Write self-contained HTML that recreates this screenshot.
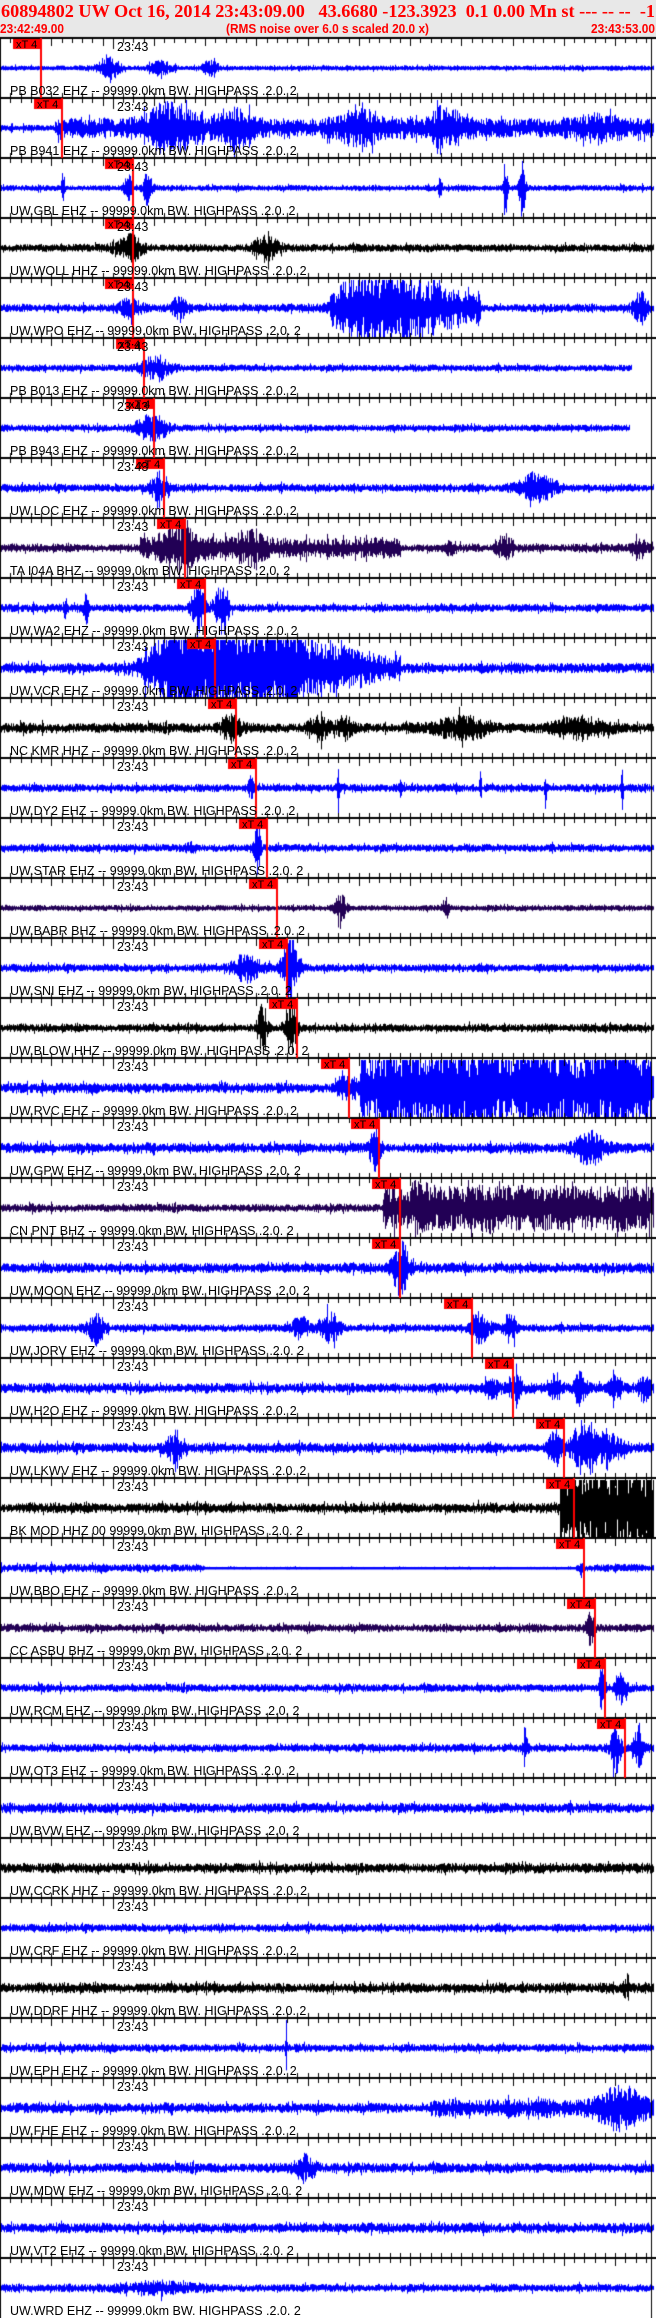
<!DOCTYPE html>
<html><head><meta charset="utf-8">
<style>
html,body{margin:0;padding:0;background:#fff;}
#wrap{position:relative;width:656px;height:2318px;overflow:hidden;background:#fff;}
canvas,svg{position:absolute;left:0;top:0;}
</style></head>
<body>
<div id="wrap">
<canvas id="c" width="656" height="2318"></canvas>
<svg id="s" width="656" height="2318" xmlns="http://www.w3.org/2000/svg" font-family="Liberation Sans, sans-serif">
<text x="1" y="17" font-family="Liberation Serif, serif" font-weight="bold" font-size="18" fill="#ff0000" textLength="654" lengthAdjust="spacingAndGlyphs" xml:space="preserve">60894802 UW Oct 16, 2014 23:43:09.00   43.6680 -123.3923  0.1 0.00 Mn st --- -- --  -1</text>
<text x="0" y="33" font-weight="bold" font-size="12.5" fill="#ff0000" textLength="64" lengthAdjust="spacingAndGlyphs">23:42:49.00</text>
<text x="226" y="33" font-weight="bold" font-size="12.5" fill="#ff0000" textLength="203" lengthAdjust="spacingAndGlyphs">(RMS noise over 6.0 s scaled 20.0 x)</text>
<text x="591" y="33" font-weight="bold" font-size="12.5" fill="#ff0000" textLength="64" lengthAdjust="spacingAndGlyphs">23:43:53.00</text>
<g id="labels" font-size="12.5" fill="#000">
<text x="10" y="95">PB B032 EHZ -- 99999.0km BW. HIGHPASS .2.0. 2</text>
<text x="10" y="155">PB B941 EHZ -- 99999.0km BW. HIGHPASS .2.0. 2</text>
<text x="10" y="215">UW.GBL EHZ -- 99999.0km BW. HIGHPASS .2.0. 2</text>
<text x="10" y="275">UW.WOLL HHZ -- 99999.0km BW. HIGHPASS .2.0. 2</text>
<text x="10" y="335">UW.WPO EHZ -- 99999.0km BW. HIGHPASS .2.0. 2</text>
<text x="10" y="395">PB B013 EHZ -- 99999.0km BW. HIGHPASS .2.0. 2</text>
<text x="10" y="455">PB B943 EHZ -- 99999.0km BW. HIGHPASS .2.0. 2</text>
<text x="10" y="515">UW.LOC EHZ -- 99999.0km BW. HIGHPASS .2.0. 2</text>
<text x="10" y="575">TA I04A BHZ -- 99999.0km BW. HIGHPASS .2.0. 2</text>
<text x="10" y="635">UW.WA2 EHZ -- 99999.0km BW. HIGHPASS .2.0. 2</text>
<text x="10" y="695">UW.VCR EHZ -- 99999.0km BW. HIGHPASS .2.0. 2</text>
<text x="10" y="755">NC KMR HHZ -- 99999.0km BW. HIGHPASS .2.0. 2</text>
<text x="10" y="815">UW.DY2 EHZ -- 99999.0km BW. HIGHPASS .2.0. 2</text>
<text x="10" y="875">UW.STAR EHZ -- 99999.0km BW. HIGHPASS .2.0. 2</text>
<text x="10" y="935">UW.BABR BHZ -- 99999.0km BW. HIGHPASS .2.0. 2</text>
<text x="10" y="995">UW.SNI EHZ -- 99999.0km BW. HIGHPASS .2.0. 2</text>
<text x="10" y="1055">UW.BLOW HHZ -- 99999.0km BW. HIGHPASS .2.0. 2</text>
<text x="10" y="1115">UW.RVC EHZ -- 99999.0km BW. HIGHPASS .2.0. 2</text>
<text x="10" y="1175">UW.GPW EHZ -- 99999.0km BW. HIGHPASS .2.0. 2</text>
<text x="10" y="1235">CN PNT BHZ -- 99999.0km BW. HIGHPASS .2.0. 2</text>
<text x="10" y="1295">UW.MOON EHZ -- 99999.0km BW. HIGHPASS .2.0. 2</text>
<text x="10" y="1355">UW.JORV EHZ -- 99999.0km BW. HIGHPASS .2.0. 2</text>
<text x="10" y="1415">UW.H2O EHZ -- 99999.0km BW. HIGHPASS .2.0. 2</text>
<text x="10" y="1475">UW.LKWV EHZ -- 99999.0km BW. HIGHPASS .2.0. 2</text>
<text x="10" y="1535">BK MOD HHZ 00 99999.0km BW. HIGHPASS .2.0. 2</text>
<text x="10" y="1595">UW.BBO EHZ -- 99999.0km BW. HIGHPASS .2.0. 2</text>
<text x="10" y="1655">CC ASBU BHZ -- 99999.0km BW. HIGHPASS .2.0. 2</text>
<text x="10" y="1715">UW.RCM EHZ -- 99999.0km BW. HIGHPASS .2.0. 2</text>
<text x="10" y="1775">UW.OT3 EHZ -- 99999.0km BW. HIGHPASS .2.0. 2</text>
<text x="10" y="1835">UW.BVW EHZ -- 99999.0km BW. HIGHPASS .2.0. 2</text>
<text x="10" y="1895">UW.CCRK HHZ -- 99999.0km BW. HIGHPASS .2.0. 2</text>
<text x="10" y="1955">UW.CRF EHZ -- 99999.0km BW. HIGHPASS .2.0. 2</text>
<text x="10" y="2015">UW.DDRF HHZ -- 99999.0km BW. HIGHPASS .2.0. 2</text>
<text x="10" y="2075">UW.EPH EHZ -- 99999.0km BW. HIGHPASS .2.0. 2</text>
<text x="10" y="2135">UW.FHE EHZ -- 99999.0km BW. HIGHPASS .2.0. 2</text>
<text x="10" y="2195">UW.MDW EHZ -- 99999.0km BW. HIGHPASS .2.0. 2</text>
<text x="10" y="2255">UW.VT2 EHZ -- 99999.0km BW. HIGHPASS .2.0. 2</text>
<text x="10" y="2315">UW.WRD EHZ -- 99999.0km BW. HIGHPASS .2.0. 2</text>
</g>
<g id="times" font-size="12.5" fill="#000">
<text x="117" y="51">23:43</text><text x="117" y="111">23:43</text><text x="117" y="171">23:43</text><text x="117" y="231">23:43</text><text x="117" y="291">23:43</text><text x="117" y="351">23:43</text><text x="117" y="411">23:43</text><text x="117" y="471">23:43</text><text x="117" y="531">23:43</text><text x="117" y="591">23:43</text><text x="117" y="651">23:43</text><text x="117" y="711">23:43</text><text x="117" y="771">23:43</text><text x="117" y="831">23:43</text><text x="117" y="891">23:43</text><text x="117" y="951">23:43</text><text x="117" y="1011">23:43</text><text x="117" y="1071">23:43</text><text x="117" y="1131">23:43</text><text x="117" y="1191">23:43</text><text x="117" y="1251">23:43</text><text x="117" y="1311">23:43</text><text x="117" y="1371">23:43</text><text x="117" y="1431">23:43</text><text x="117" y="1491">23:43</text><text x="117" y="1551">23:43</text><text x="117" y="1611">23:43</text><text x="117" y="1671">23:43</text><text x="117" y="1731">23:43</text><text x="117" y="1791">23:43</text><text x="117" y="1851">23:43</text><text x="117" y="1911">23:43</text><text x="117" y="1971">23:43</text><text x="117" y="2031">23:43</text><text x="117" y="2091">23:43</text><text x="117" y="2151">23:43</text><text x="117" y="2211">23:43</text><text x="117" y="2271">23:43</text>
</g>
<g id="picks"></g>
</svg>
</div>
<script>
(function(){
var cv=document.getElementById('c'),ctx=cv.getContext('2d');
ctx.fillStyle='#e8e8e8';ctx.fillRect(0,0,656,37);
var NS='http://www.w3.org/2000/svg';
var seed=12345;function rnd(){seed=(seed*1103515245+12345)&0x7fffffff;return seed/0x7fffffff;}
var B='#0000ff',K='#000000',P='#220055';
var P_=[
[B,2.5,[['g',108,12,10],['g',160,6,10],['g',210,7,8]]],
[B,3,[['r',55,656,7],['g',170,20,25],['g',235,14,15],['g',360,12,20],['g',445,16,15],['g',600,6,20]]],
[B,3,[['g',63,22,1.5],['g',128,12,4],['g',147,18,4],['g',440,10,2],['g',505,30,2],['g',522,28,3]]],
[K,4,[['g',130,12,12],['g',265,10,12]]],
[B,4,[['g',130,10,10],['g',180,12,8],['r',330,480,12],['g',370,20,30],['g',420,15,25],['g',640,12,8]]],
[B,3.5,[['g',155,12,15]],[0,632]],
[B,3.5,[['g',150,13,15]],[0,630]],
[B,4,[['g',160,12,10],['g',535,12,20]]],
[P,4,[['r',140,400,6],['g',180,14,20],['g',250,10,20],['g',505,12,8],['g',450,7,5],['g',640,8,8]]],
[B,4,[['g',65,8,2],['g',86,12,2],['g',198,30,6],['g',222,25,6]]],
[B,5,[['r',145,400,10],['g',250,40,70],['g',175,25,20]]],
[K,5,[['g',230,12,10],['g',318,9,10],['g',345,9,8],['g',460,10,25],['g',580,10,25]]],
[B,4,[['g',250,10,3],['g',338,22,1],['g',400,20,1],['g',480,20,1],['g',545,22,1],['g',622,22,1]]],
[B,4,[['g',257,28,3],['g',190,4,5]]],
[P,3,[['g',340,12,6],['g',445,8,4]]],
[B,4,[['g',245,12,15],['g',290,28,8]]],
[K,4,[['g',262,22,5],['g',290,28,6]]],
[B,5,[['r',335,656,8],['r',360,650,30]]],
[B,5,[['g',375,22,5],['g',590,14,15]]],
[P,4,[['r',383,656,20]]],
[B,5,[['g',400,25,8]]],
[B,4,[['g',95,14,8],['g',300,10,8],['g',330,14,10],['g',480,12,10],['g',510,14,6]]],
[B,5,[['g',490,10,6],['g',515,14,6],['g',555,12,6],['g',580,14,6],['g',615,12,6],['g',645,12,6]]],
[B,5,[['g',175,12,10],['g',555,16,6],['g',585,30,12],['g',610,14,12]]],
[K,5,[['r',560,656,40]]],
[B,4,[['g',582,12,2]],null,[205,575]],
[P,4,[['g',590,14,4]]],
[B,4,[['g',602,26,3],['g',620,15,6]]],
[B,4,[['g',525,22,2],['g',615,22,5],['g',638,20,5]]],
[B,5,[]],
[K,5,[]],
[B,4,[]],
[K,5,[['g',626,10,2]]],
[B,4,[['g',286,35,0.7]]],
[B,5,[['r',430,656,4],['g',620,16,20]]],
[B,5,[['g',305,12,10]]],
[B,5,[]],
[B,4,[['g',160,4,40]]]
];
var picks=[41,62,133,133,133,144,154,164,185,205,215,236,256,267,277,287,297,349,379,400,400,472,513,564,574,584,595,605,625];
function amp(p,x){var A=p[1];var e=p[2];for(var i=0;i<e.length;i++){var v=e[i];
 if(v[0]=='g')A+=v[2]*Math.exp(-Math.pow((x-v[1])/v[3],2));
 else if(v[0]=='r'){if(x>=v[1]&&x<=v[2])A+=v[3];}}
 if(p[4]&&x>=p[4][0]&&x<=p[4][1])A=1.2;return A;}
for(var k=0;k<38;k++){
 var p=P_[k],top=38+60*k,cy=top+30;
 var st=p[3]?p[3][0]:1,en=p[3]?p[3][1]:654;
 ctx.fillStyle=p[0];
 ctx.fillRect(st,cy-1,en-st,2.5);
 var slow=1;
 for(var x=st;x<en;x++){
  slow=0.85*slow+0.15*(0.5+rnd()*1.0);
  var A=amp(p,x)*slow;
  var u=A*(0.25+0.75*Math.pow(rnd(),0.8)),d=A*(0.25+0.75*Math.pow(rnd(),0.8));
  if(rnd()<0.06){u*=1.5;d*=1.5;}
  var y0=Math.max(top+2,cy-u),y1=Math.min(top+59,cy+d);
  ctx.fillRect(x,y0,1,y1-y0);
 }
}
ctx.fillStyle='#000';
for(var k=0;k<38;k++){
 var y=37+60*k;ctx.fillRect(0,y,656,2);
 for(var s=1;s<64;s++){var x=Math.round(s*10.25);
  var dn=4,upx=(k>0)?4:0;
  if(s%5==0)dn=7;
  if(s==11)dn=10;
  ctx.fillRect(x,y-upx,1,upx+2+dn);}
}
ctx.fillRect(0,37,1,2281);ctx.fillRect(651,37,1,2281);
var pg=document.getElementById('picks');
for(var k=0;k<picks.length;k++){
 var top=38+60*k,x=picks[k];
 ctx.fillStyle='#ff0000';ctx.fillRect(x-28,top+1,28,10);ctx.fillRect(x-1,top,2,60);
 var tt=document.createElementNS(NS,'text');tt.setAttribute('x',x-25);tt.setAttribute('y',top+10);tt.setAttribute('font-size','11');tt.setAttribute('fill','#000');tt.textContent='xT 4';pg.appendChild(tt);
}
})();
</script>
</body></html>
